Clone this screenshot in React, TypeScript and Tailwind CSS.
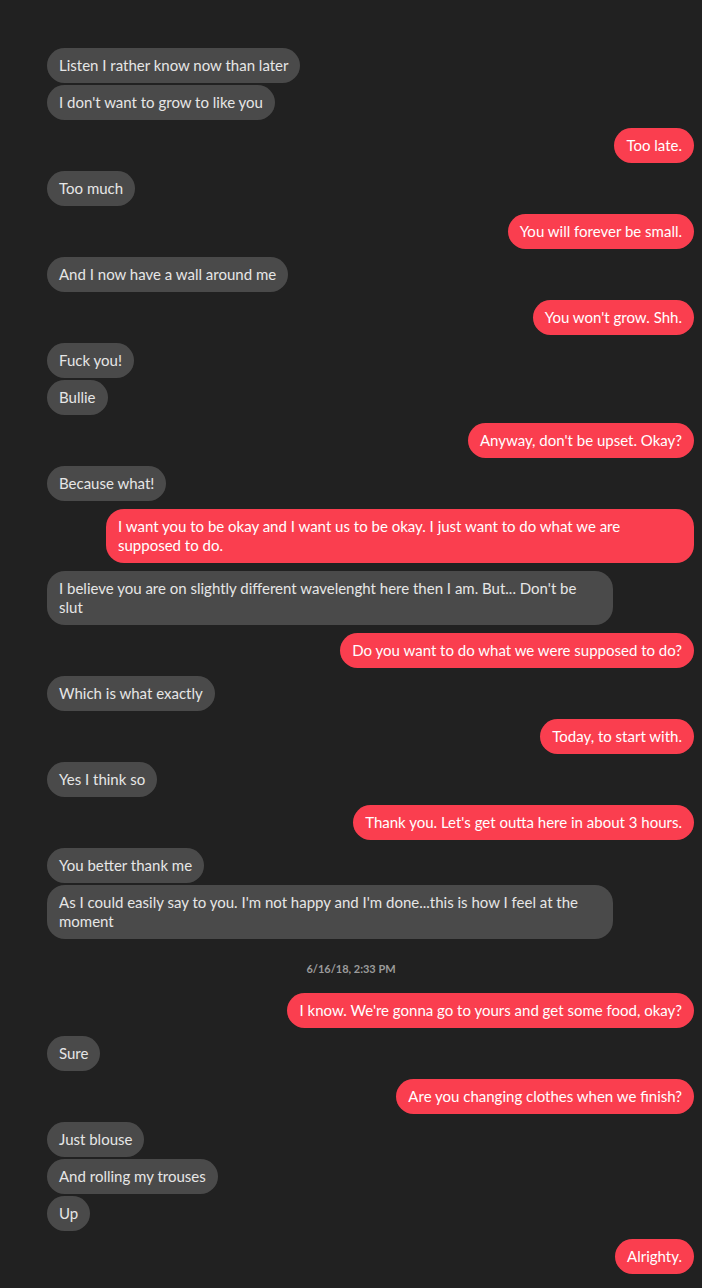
import React from "react"

type Msg =
  | { kind: "in" | "out"; text: string; lines?: string[]; gap?: number }
  | { kind: "time"; text: string }

const messages: Msg[] = [
  { kind: "in", text: "Listen I rather know now than later" },
  { kind: "in", text: "I don't want to grow to like you", gap: 2 },
  { kind: "out", text: "Too late." },
  { kind: "in", text: "Too much" },
  { kind: "out", text: "You will forever be small." },
  { kind: "in", text: "And I now have a wall around me" },
  { kind: "out", text: "You won't grow. Shh." },
  { kind: "in", text: "Fuck you!" },
  { kind: "in", text: "Bullie", gap: 2 },
  { kind: "out", text: "Anyway, don't be upset. Okay?" },
  { kind: "in", text: "Because what!" },
  {
    kind: "out",
    text: "",
    lines: [
      "I want you to be okay and I want us to be okay. I just want to do what we are",
      "supposed to do.",
    ],
  },
  {
    kind: "in",
    text: "",
    lines: [
      "I believe you are on slightly different wavelenght here then I am. But... Don't be",
      "slut",
    ],
  },
  { kind: "out", text: "Do you want to do what we were supposed to do?" },
  { kind: "in", text: "Which is what exactly" },
  { kind: "out", text: "Today, to start with." },
  { kind: "in", text: "Yes I think so" },
  { kind: "out", text: "Thank you. Let's get outta here in about 3 hours." },
  { kind: "in", text: "You better thank me" },
  {
    kind: "in",
    text: "",
    gap: 2,
    lines: [
      "As I could easily say to you. I'm not happy and I'm done...this is how I feel at the",
      "moment",
    ],
  },
  { kind: "time", text: "6/16/18, 2:33 PM" },
  { kind: "out", text: "I know. We're gonna go to yours and get some food, okay?", gap: 0 },
  { kind: "in", text: "Sure" },
  { kind: "out", text: "Are you changing clothes when we finish?" },
  { kind: "in", text: "Just blouse" },
  { kind: "in", text: "And rolling my trouses", gap: 2 },
  { kind: "in", text: "Up", gap: 2 },
  { kind: "out", text: "Alrighty." },
]

function Bubble({ msg }: { msg: Exclude<Msg, { kind: "time" }> }) {
  const isOut = msg.kind === "out"
  const multi = !!msg.lines
  return (
    <div
      className={`flex ${isOut ? "justify-end pr-2" : "justify-start pl-[47px]"}`}
      style={{ marginTop: msg.gap ?? 8 }}
    >
      <div
        className={`px-3 py-2 text-[15px] leading-[19px] ${
          multi ? "rounded-[18px]" : "rounded-full"
        } ${
          isOut
            ? "bg-[#fa3e4f] text-white"
            : "bg-[#4a4a4a] text-[#e6e6e6]"
        } ${multi ? (isOut ? "w-[588px]" : "w-[566px]") : ""}`}
      >
        {msg.lines
          ? msg.lines.map((l, i) => (
              <React.Fragment key={i}>
                {l}
                {i < msg.lines!.length - 1 && <br />}
              </React.Fragment>
            ))
          : msg.text}
      </div>
    </div>
  )
}

export default function App() {
  return (
    <div
      className="min-h-[1288px] w-[702px] bg-[#212121] pt-[40px]"
      style={{ fontFamily: "Lato, 'Noto Sans', sans-serif" }}
    >
      {messages.map((m, i) =>
        m.kind === "time" ? (
          <div
            key={i}
            className="mt-[22px] mb-[16px] text-center text-[11px] font-bold leading-[16px] text-[#9b9b9b]"
          >
            {m.text}
          </div>
        ) : (
          <Bubble key={i} msg={m} />
        ),
      )}
    </div>
  )
}
